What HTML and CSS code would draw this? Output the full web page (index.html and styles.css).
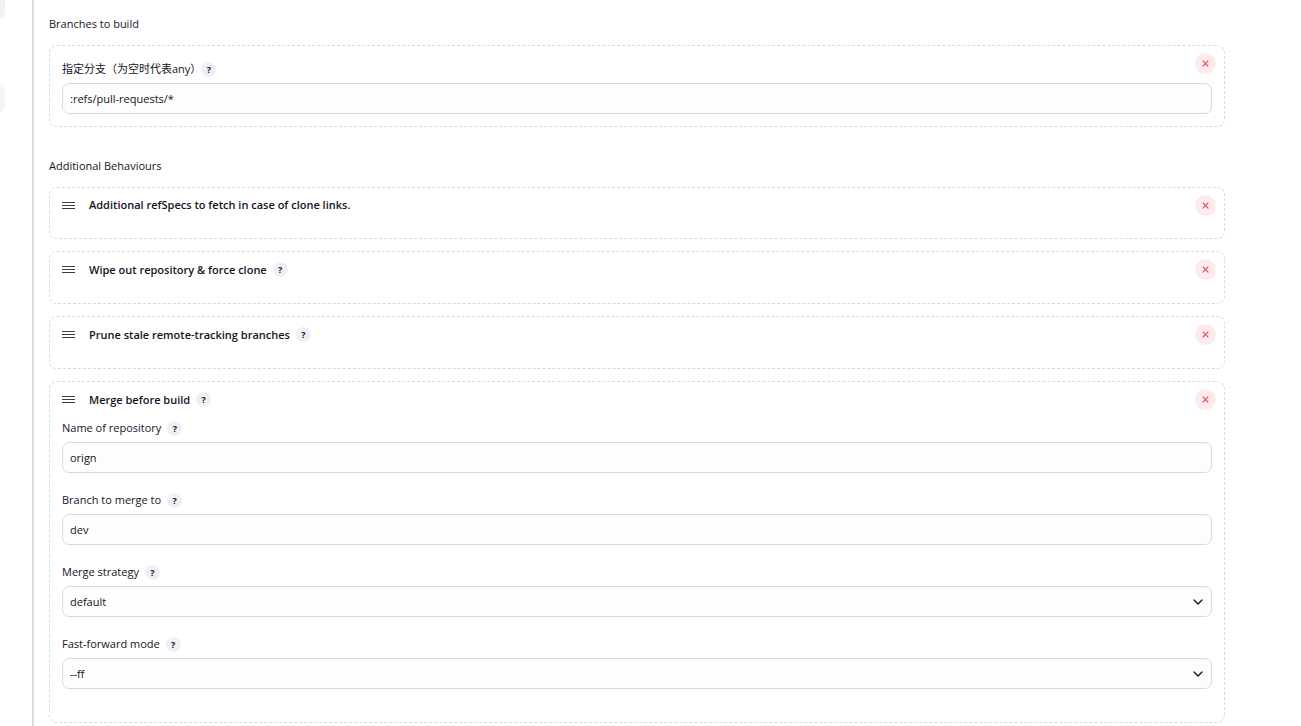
FILE: index.html
```html
<!DOCTYPE html>
<html lang="en">
<head>
<meta charset="utf-8">
<title>Source settings</title>
<link rel="stylesheet" href="styles.css">
</head>
<body>
<svg class="defs" aria-hidden="true">
  <symbol id="grip" viewBox="0 0 13 7"><path d="M0 .5h13M0 3.5h13M0 6.5h13" stroke="#3c3c46" stroke-width="1"/></symbol>
  <symbol id="cross" viewBox="0 0 7 7"><path d="M.7.7l5.6 5.6M6.3.7L.7 6.3" stroke="#e6405c" stroke-width="1.1"/></symbol>
  <symbol id="chevron" viewBox="0 0 10 6"><path d="M1 1l4 4 4-4" fill="none" stroke="#14141f" stroke-width="1.4" stroke-linecap="round" stroke-linejoin="round"/></symbol>
</svg>
<div class="page">
  <nav class="rail" aria-label="Sections">
    <a class="rail-item" href="#branches" aria-label="Branches"></a>
    <a class="rail-item rail-item-light" href="#behaviours" aria-label="Behaviours"></a>
  </nav>
  <main class="content">
    <section class="section" id="branches">
      <h2 class="section-title">Branches to build</h2>
      <div class="card card-plain">
        <button class="close" type="button" aria-label="Delete branch"><svg><use href="#cross"/></svg></button>
        <div class="field">
          <div class="label-row label-row-cjk"><label for="branch">指定分支（为空时代表any）</label><button class="help" type="button">?</button></div>
          <input class="control" id="branch" type="text" value=":refs/pull-requests/*">
        </div>
      </div>
    </section>
    <section class="section" id="behaviours">
      <h2 class="section-title">Additional Behaviours</h2>
      <div class="cards">
        <div class="card">
          <div class="card-head"><svg class="grip"><use href="#grip"/></svg><h3 class="card-title">Additional refSpecs to fetch in case of clone links.</h3></div>
          <button class="close" type="button" aria-label="Delete refSpecs"><svg><use href="#cross"/></svg></button>
        </div>
        <div class="card">
          <div class="card-head"><svg class="grip"><use href="#grip"/></svg><h3 class="card-title">Wipe out repository &amp; force clone</h3><button class="help" type="button">?</button></div>
          <button class="close" type="button" aria-label="Delete wipe out"><svg><use href="#cross"/></svg></button>
        </div>
        <div class="card">
          <div class="card-head"><svg class="grip"><use href="#grip"/></svg><h3 class="card-title">Prune stale remote-tracking branches</h3><button class="help" type="button">?</button></div>
          <button class="close" type="button" aria-label="Delete prune"><svg><use href="#cross"/></svg></button>
        </div>
        <div class="card">
          <div class="card-head"><svg class="grip"><use href="#grip"/></svg><h3 class="card-title">Merge before build</h3><button class="help" type="button">?</button></div>
          <button class="close" type="button" aria-label="Delete merge"><svg><use href="#cross"/></svg></button>
          <div class="fields">
            <div class="field">
              <div class="label-row"><label for="repo">Name of repository</label><button class="help" type="button">?</button></div>
              <input class="control" id="repo" type="text" value="orign">
            </div>
            <div class="field">
              <div class="label-row"><label for="target">Branch to merge to</label><button class="help" type="button">?</button></div>
              <input class="control" id="target" type="text" value="dev">
            </div>
            <div class="field">
              <div class="label-row"><label for="strategy">Merge strategy</label><button class="help" type="button">?</button></div>
              <div class="select"><select class="control" id="strategy"><option>default</option></select><svg class="chevron"><use href="#chevron"/></svg></div>
            </div>
            <div class="field">
              <div class="label-row"><label for="ff">Fast-forward mode</label><button class="help" type="button">?</button></div>
              <div class="select"><select class="control" id="ff"><option>--ff</option></select><svg class="chevron"><use href="#chevron"/></svg></div>
            </div>
          </div>
        </div>
      </div>
    </section>
  </main>
</div>
</body>
</html>
```
FILE: styles.css
```css
* { box-sizing: border-box; }
body {
  margin: 0;
  background: #fff;
  color: #14141f;
  font: 11px/20px "Open Sans", "Noto Sans CJK SC", sans-serif;
}
.defs { display: none; }
.page { display: flex; min-height: 100vh; }
.rail {
  flex: 0 0 34px;
  display: flex;
  flex-direction: column;
  gap: 66px;
  border-right: 2px solid #d5dce8;
}
.rail-item { width: 5px; height: 18px; background: #f0f0f6; border-radius: 0 0 6px 0; }
.rail-item-light { height: 28px; background: #f5f5f9; border-radius: 0 6px 6px 0; }
.content {
  flex: 1;
  display: flex;
  flex-direction: column;
  gap: 29px;
  padding: 14px 76px 3px 15px;
}
.section-title { margin: 0 0 11px; font-size: 11px; font-weight: 400; line-height: 20px; }
.cards { display: flex; flex-direction: column; gap: 12px; }
.card {
  position: relative;
  padding: 7px 12px 23px;
  border: 1px dashed #d5dbe4;
  border-radius: 8px;
}
.card-plain { padding: 13px 12px 12px; }
.card:has(.fields) { padding-bottom: 33px; }
.card-head { display: flex; align-items: center; min-height: 20px; }
.card-head:has(.help) { min-height: 21px; }
.grip { width: 13px; height: 7px; margin-right: 14px; }
.card-title { margin: 0; font-size: 11px; font-weight: 600; line-height: 20px; }
.help {
  width: 15px;
  height: 15px;
  margin-left: 6px;
  padding: 0;
  border: 0;
  border-radius: 50%;
  background: #edf0f4;
  color: #14141f;
  font: 700 9px/15px "Open Sans", sans-serif;
  text-align: center;
}
.close {
  position: absolute;
  top: 7px;
  right: 8px;
  display: grid;
  place-items: center;
  width: 21px;
  height: 21px;
  padding: 0;
  border: 0;
  border-radius: 50%;
  background: #fdeaed;
}
.close svg { width: 7px; height: 7px; }
.fields { display: flex; flex-direction: column; gap: 17px; margin-top: 8px; }
.label-row { display: flex; align-items: center; height: 20px; margin-bottom: 4px; }
.label-row-cjk .help { margin-left: 0; }
.control {
  display: block;
  width: 100%;
  height: 31px;
  padding: 0 7px;
  border: 1px solid #d5dbe6;
  border-radius: 7px;
  background: #fdfdfd;
  color: inherit;
  font: inherit;
  appearance: none;
}
.select { position: relative; }
.chevron {
  position: absolute;
  top: 13px;
  right: 9px;
  width: 10px;
  height: 6px;
  pointer-events: none;
}
```
